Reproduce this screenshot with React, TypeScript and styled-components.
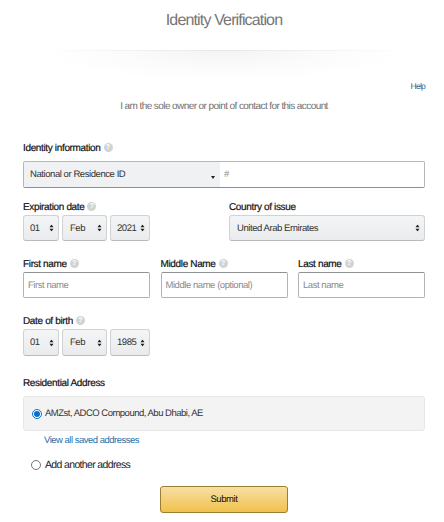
import React from 'react';
import styled, { createGlobalStyle } from 'styled-components';

const GlobalStyle = createGlobalStyle`
	html, body {
		margin: 0;
		background: #fff;
		font-family: "Liberation Sans", Arial, sans-serif;
		color: #111;
		text-rendering: geometricPrecision;
	}
	input, select, button {
		text-rendering: geometricPrecision;
	}
`;

const Page = styled.div`
	width: 444px;
	height: 522px;
	overflow: hidden;
	box-sizing: border-box;
	padding: 0 19px 0 23px;
	display: flex;
	flex-direction: column;
`;

const Title = styled.h1`
	margin: 11px 0 0;
	font-size: 16px;
	line-height: 19px;
	font-weight: 400;
	letter-spacing: -0.85px;
	color: #767676;
	text-align: center;
`;

const Divider = styled.div`
	height: 31px;
	margin: 20px 20px 0;
	background:
		linear-gradient(90deg, #fff 0%, #eee 30%, #e8e8e8 50%, #eee 70%, #fff 100%) top / 100% 1px no-repeat,
		radial-gradient(ellipse 50% 100% at 50% 0, #f3f3f3 0%, #fbfbfb 55%, #fff 100%);
`;

const HelpLink = styled.a`
	align-self: flex-end;
	font-size: 8.5px;
	line-height: 11px;
	letter-spacing: -0.75px;
	color: #2a5f9e;
`;

const Subtitle = styled.p`
	margin: 9px 0 0;
	font-size: 10px;
	line-height: 12px;
	letter-spacing: -0.58px;
	color: #6f6f6f;
	text-align: center;
`;

const Label = styled.label`
	display: flex;
	align-items: center;
	gap: 3px;
	font-size: 10px;
	line-height: 12px;
	letter-spacing: -0.35px;
	color: #111;
	-webkit-text-stroke: 0.2px #111;
`;

const Hint = styled.span`
	width: 9px;
	height: 9px;
	margin-bottom: 3px;
	border-radius: 50%;
	background: #d2d4d4;
	color: #fff;
	font-size: 7px;
	font-weight: 700;
	line-height: 9px;
	letter-spacing: 0;
	text-align: center;
	-webkit-text-stroke: 0;
`;

const IdentitySection = styled.section`
	margin-top: 30px;
	display: flex;
	flex-direction: column;
	gap: 6px;
`;

const IdRow = styled.div`
	height: 27px;
	display: flex;
	box-sizing: border-box;
	border: 1px solid #b5b8b8;
	border-bottom-color: #8d9090;
	border-radius: 2px;
`;

const IdType = styled.div`
	width: 196px;
	flex: none;
	position: relative;
	background: #eff1f3;
`;

const SelectBox = styled.div<{ $width: number | string; $height?: number }>`
	position: relative;
	width: ${p => (typeof p.$width === 'number' ? `${p.$width}px` : p.$width)};
	flex: none;
	box-sizing: border-box;
	height: ${p => p.$height ?? 26}px;
	border: 1px solid #d0d3d3;
	border-bottom-color: #b8bbbb;
	border-radius: 3px;
	background: linear-gradient(#f4f5f6, #e9ebed);
`;

const Select = styled.select<{ $pad?: number }>`
	appearance: none;
	width: 100%;
	height: 100%;
	border: 0;
	background: transparent;
	padding: 0 0 0 ${p => p.$pad ?? 6}px;
	font: 9.5px "Liberation Sans", Arial, sans-serif;
	letter-spacing: -0.43px;
	color: #333;
`;

const Arrow = styled.svg`
	position: absolute;
	top: 50%;
	right: 4px;
	width: 5px;
	height: 7px;
	transform: translateY(-50%);
	fill: #222;
`;

const CaretDown = styled.svg`
	position: absolute;
	top: 50%;
	right: 5px;
	width: 4px;
	height: 3px;
	margin-top: 1px;
	fill: #222;
`;

const IdInput = styled.input`
	flex: 1;
	min-width: 0;
	border: 0;
	padding: 0 4px;
	background: #fff;
	font: 9.5px "Liberation Sans", Arial, sans-serif;
	letter-spacing: -0.43px;
	&::placeholder { color: #8a8a8a; }
`;

const DateCountryRow = styled.div`
	margin-top: 14px;
	display: flex;
	justify-content: space-between;
`;

const FieldColumn = styled.div<{ $width?: number }>`
	display: flex;
	flex-direction: column;
	gap: 1px;
	width: ${p => (p.$width ? `${p.$width}px` : 'auto')};
`;

const DateSelects = styled.div`
	display: flex;
	gap: 3px;
`;

const NameRow = styled.div`
	margin-top: 18px;
	display: flex;
	justify-content: space-between;
`;

const NameInput = styled.input`
	box-sizing: border-box;
	width: 127px;
	height: 26px;
	border: 1px solid #b0b3b3;
	border-top-color: #8f9292;
	border-radius: 2px;
	padding: 0 4px;
	font: 9.5px "Liberation Sans", Arial, sans-serif;
	letter-spacing: -0.45px;
	&::placeholder { color: #8a8a8a; }
`;

const BirthSection = styled.div`
	margin-top: 18px;
`;

const AddressHeading = styled(Label)`
	margin-top: 22px;
`;

const AddressPanel = styled.div`
	margin-top: 6px;
	height: 35px;
	box-sizing: border-box;
	padding: 0 8px;
	display: flex;
	align-items: center;
	gap: 3px;
	background: #f3f3f3;
	border: 1px solid #e7e7e7;
	border-radius: 3px;
	font-size: 9.5px;
	letter-spacing: -0.5px;
	color: #333;
`;

const Radio = styled.input`
	width: 10px;
	height: 10px;
	margin: 0;
	flex: none;
	accent-color: #0a6ed1;
`;

const SavedLink = styled.a`
	margin: 4px 0 0 21px;
	font-size: 9.5px;
	line-height: 12px;
	letter-spacing: -0.5px;
	color: #2a6fa8;
`;

const AddRow = styled.label`
	margin: 12px 0 0 8px;
	display: flex;
	align-items: center;
	gap: 4px;
	font-size: 10.5px;
	line-height: 12px;
	letter-spacing: -0.65px;
	color: #222;
`;

const SubmitButton = styled.button`
	align-self: center;
	width: 128px;
	height: 27px;
	margin-top: 15px;
	border: 1px solid #9c7e31;
	border-radius: 3px;
	background: linear-gradient(#f7dfa5, #f0c14b);
	font: 9.5px "Liberation Sans", Arial, sans-serif;
	letter-spacing: -0.4px;
	color: #111;
`;

const UpDown = () => (
	<Arrow viewBox="0 0 5 7">
		<path d="M2.5 0 L4.5 2.7 H0.5 Z M2.5 7 L0.5 4.3 H4.5 Z" />
	</Arrow>
);

const DatePicker: React.FC<{ year: string; height?: number }> = ({ year, height }) => (
	<DateSelects>
		<SelectBox $width={36} $height={height}>
			<Select $pad={6} defaultValue="01"><option>01</option></Select>
			<UpDown />
		</SelectBox>
		<SelectBox $width={45} $height={height}>
			<Select $pad={7} defaultValue="Feb"><option>Feb</option></Select>
			<UpDown />
		</SelectBox>
		<SelectBox $width={40} $height={height}>
			<Select $pad={6} defaultValue={year}><option>{year}</option></Select>
			<UpDown />
		</SelectBox>
	</DateSelects>
);

const App: React.FC = () => (
	<>
		<GlobalStyle />
		<Page>
			<Title>Identity Verification</Title>
			<Divider />
			<HelpLink>Help</HelpLink>
			<Subtitle>I am the sole owner or point of contact for this account</Subtitle>

			<IdentitySection>
				<Label>Identity information <Hint>?</Hint></Label>
				<IdRow>
					<IdType>
						<Select defaultValue="National or Residence ID"><option>National or Residence ID</option></Select>
						<CaretDown viewBox="0 0 4 3"><path d="M0 0 H4 L2 3 Z" /></CaretDown>
					</IdType>
					<IdInput placeholder="#" />
				</IdRow>
			</IdentitySection>

			<DateCountryRow>
				<FieldColumn>
					<Label>Expiration date <Hint>?</Hint></Label>
					<DatePicker year="2021" />
				</FieldColumn>
				<FieldColumn $width={196}>
					<Label>Country of issue</Label>
					<SelectBox $width="100%">
						<Select $pad={7} defaultValue="United Arab Emirates"><option>United Arab Emirates</option></Select>
						<UpDown />
					</SelectBox>
				</FieldColumn>
			</DateCountryRow>

			<NameRow>
				<FieldColumn>
					<Label>First name <Hint>?</Hint></Label>
					<NameInput placeholder="First name" />
				</FieldColumn>
				<FieldColumn>
					<Label>Middle Name <Hint>?</Hint></Label>
					<NameInput placeholder="Middle name (optional)" />
				</FieldColumn>
				<FieldColumn>
					<Label>Last name <Hint>?</Hint></Label>
					<NameInput placeholder="Last name" />
				</FieldColumn>
			</NameRow>

			<BirthSection>
				<FieldColumn>
					<Label>Date of birth <Hint>?</Hint></Label>
					<DatePicker year="1985" height={27} />
				</FieldColumn>
			</BirthSection>

			<AddressHeading>Residential Address</AddressHeading>
			<AddressPanel>
				<Radio type="radio" name="address" defaultChecked />
				AMZst, ADCO Compound, Abu Dhabi, AE
			</AddressPanel>
			<SavedLink>View all saved addresses</SavedLink>
			<AddRow>
				<Radio type="radio" name="address" />
				Add another address
			</AddRow>
			<SubmitButton type="button">Submit</SubmitButton>
		</Page>
	</>
);

export default App;
